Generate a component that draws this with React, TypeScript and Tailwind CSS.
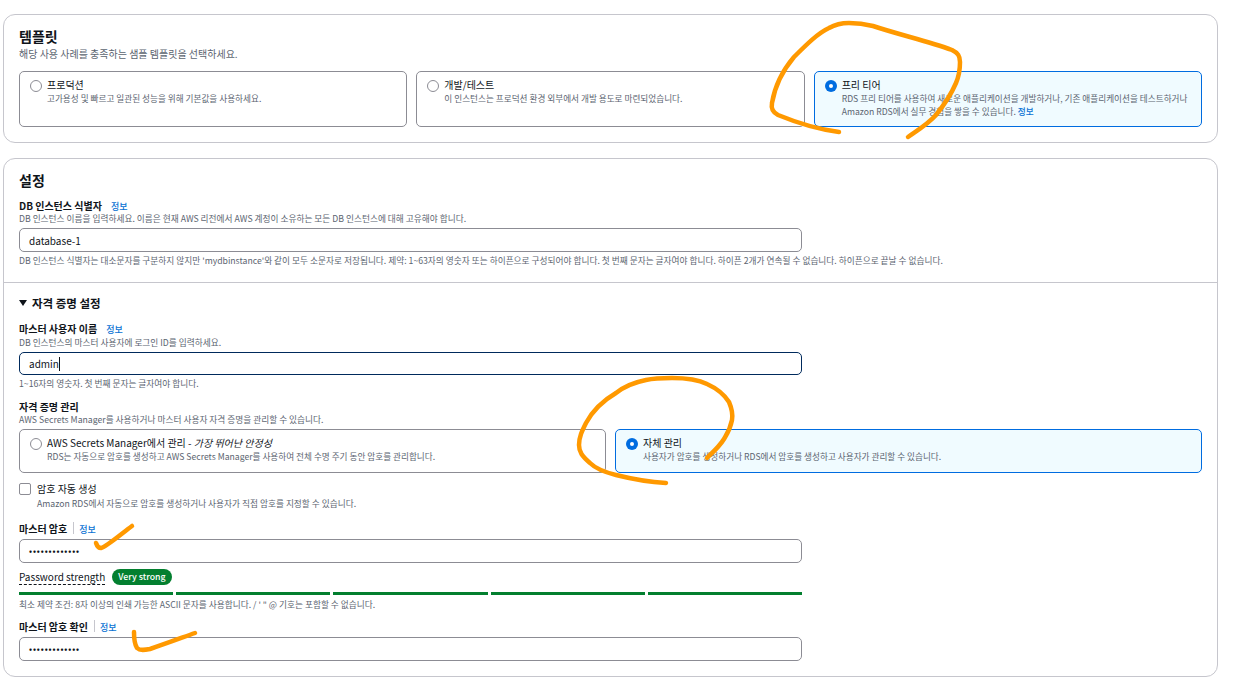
const FONT = 'font-["Noto_Sans_CJK_KR","Noto_Sans",sans-serif]'

function Label({ text, info, divider, className }: { text: string; info?: boolean; divider?: boolean; className: string }) {
  return (
    <div className={`flex h-3 items-baseline text-[10px] font-bold leading-[14px] text-[#0f141a] ${className}`}>
      {text}
      {info && !divider && <a className="ml-[9px] text-[9px] font-medium text-[#0972d3]">정보</a>}
      {divider && (
        <>
          <span className="ml-[6px] mr-[5px] h-[12px] w-px self-center bg-[#c6c6cd]" />
          <a className="text-[9px] font-medium text-[#0972d3]">정보</a>
        </>
      )}
    </div>
  )
}

function Desc({ children, className = '' }: { children: React.ReactNode; className?: string }) {
  return <p className={`h-3 whitespace-nowrap text-[8.7px] leading-[14px] text-[#5b6470] ${className}`}>{children}</p>
}

function Radio({ checked }: { checked?: boolean }) {
  if (checked) {
    return (
      <span className="mt-[1px] flex h-3 w-3 shrink-0 items-center justify-center rounded-full bg-[#006ce0]">
        <span className="h-1 w-1 rounded-full bg-white" />
      </span>
    )
  }
  return <span className="mt-[1px] h-3 w-3 shrink-0 rounded-full border border-[#8c8c94] bg-white" />
}

function Option({ title, checked, height, children }: { title: React.ReactNode; checked?: boolean; height: string; children: React.ReactNode }) {
  return (
    <div
      className={`flex gap-[5px] rounded-[5px] border pl-[10px] pr-2 pt-[7px] ${height} ${
        checked ? 'border-[#006ce0] bg-[#f0fbff]' : 'border-[#8c8c94] bg-white'
      }`}
    >
      <Radio checked={checked} />
      <div className="min-w-0">
        <div className="h-3 whitespace-nowrap text-[10px] leading-3 text-[#0f141a]">{title}</div>
        <div className="mt-px text-[8.65px] leading-[13px] text-[#5b6470]">{children}</div>
      </div>
    </div>
  )
}

function Field({ value, height = 'h-6', focused, password, className }: { value: string; height?: string; focused?: boolean; password?: boolean; className: string }) {
  return (
    <div
      className={`flex w-[783px] items-center rounded-[5px] border bg-white px-[9px] ${height} ${className} ${
        focused ? 'border-[#002a5c]' : 'border-[#8c8c94]'
      }`}
    >
      <span className={password ? 'text-[8px] font-bold tracking-[0.9px] text-[#0f141a]' : 'text-[10px] text-[#0f141a]'}>{value}</span>
      {focused && <span className="h-[14px] w-px bg-[#0f141a]" />}
    </div>
  )
}

function Scribbles() {
  const common = { fill: 'none', stroke: '#ff9900', strokeWidth: 4.5, strokeLinecap: 'round' as const, strokeLinejoin: 'round' as const }
  return (
    <svg className="pointer-events-none absolute left-0 top-0" width="1238" height="690" viewBox="0 0 1238 690">
      <path {...common} d="M839 132 C815 129 795 122 778 115 C772 112 771 108 772 103 C775 85 783 70 794 57 C806 45 818 33 829 28 C836 24 842 23 849 23 C857 23 865 24 873 26 C900 35 928 41 952 50 C958 53 960 56 960 62 C960 70 959 76 956 83 C950 97 944 105 936 115 C928 124 918 130 908 137" />
      <path {...common} d="M666 483 C648 482 632 479 616 475 C604 472 596 469 590 463 C582 456 579 452 579 445 C579 437 582 431 586 423 C593 410 604 400 616 393 C626 385 636 382 646 380 C655 378 664 378 672 378 C685 378 697 379 707 384 C718 389 724 394 729 402 C732 409 733 414 732 420 C730 430 727 434 724 439 C719 447 713 452 707 458" />
      <path {...common} d="M96 543 C97 546 99 548 101 548 C106 547 120 535 132 526" />
      <path {...common} d="M134 632 C134 640 135 645 137 648 C140 651 145 650 150 649 C165 644 181 638 195 633" />
    </svg>
  )
}

export default function App() {
  const card = 'w-[1215px] rounded-[12px] border border-[#c6c6cd] bg-white'
  return (
    <div className={`relative h-[690px] w-[1238px] overflow-hidden bg-white pl-[3px] pt-[14px] ${FONT}`}>
      <section className={`${card} px-[15px] pb-[15px] pt-[11px]`}>
        <h2 className="h-5 text-[14px] font-bold leading-5 text-[#0f141a]">템플릿</h2>
        <p className="mt-[2px] h-3 whitespace-nowrap text-[10px] leading-3 text-[#5b6470]">해당 사용 사례를 충족하는 샘플 템플릿을 선택하세요.</p>
        <div className="mt-[11px] grid grid-cols-3 gap-[9px]">
          <Option title="프로덕션" height="h-14">고가용성 및 빠르고 일관된 성능을 위해 기본값을 사용하세요.</Option>
          <Option title="개발/테스트" height="h-14">이 인스턴스는 프로덕션 환경 외부에서 개발 용도로 마련되었습니다.</Option>
          <Option title="프리 티어" height="h-14" checked>
            RDS 프리 티어를 사용하여 새로운 애플리케이션을 개발하거나, 기존 애플리케이션을 테스트하거나 Amazon RDS에서 실무 경험을 쌓을 수 있습니다.{' '}
            <a className="font-medium text-[#0972d3]">정보</a>
          </Option>
        </div>
      </section>

      <section className={`${card} mt-[15px] pb-[15px] pt-[11px]`}>
        <div className="px-[15px]">
          <h2 className="h-5 text-[14px] font-bold leading-5 text-[#0f141a]">설정</h2>
          <Label text="DB 인스턴스 식별자" info className="mt-[9px]" />
          <Desc className="mt-px">DB 인스턴스 이름을 입력하세요. 이름은 현재 AWS 리전에서 AWS 계정이 소유하는 모든 DB 인스턴스에 대해 고유해야 합니다.</Desc>
          <Field value="database-1" className="mt-1" />
          <Desc className="mt-[2px]">DB 인스턴스 식별자는 대소문자를 구분하지 않지만 'mydbinstance'와 같이 모두 소문자로 저장됩니다. 제약: 1~63자의 영숫자 또는 하이픈으로 구성되어야 합니다. 첫 번째 문자는 글자여야 합니다. 하이픈 2개가 연속될 수 없습니다. 하이픈으로 끝날 수 없습니다.</Desc>
        </div>
        <div className="mt-4 border-t border-[#c6c6cd]" />
        <div className="px-[15px]">
          <h3 className="mt-3 flex h-4 items-center gap-[5px] text-[11.5px] font-bold leading-4 text-[#0f141a]">
            <span className="h-0 w-0 border-x-[4px] border-t-[6px] border-x-transparent border-t-[#0f141a]" />
            자격 증명 설정
          </h3>
          <Label text="마스터 사용자 이름" info className="mt-[11px]" />
          <Desc className="mt-[2px]">DB 인스턴스의 마스터 사용자에 로그인 ID를 입력하세요.</Desc>
          <Field value="admin" height="h-[23px]" focused className="mt-1" />
          <Desc className="mt-[2px]">1~16자의 영숫자. 첫 번째 문자는 글자여야 합니다.</Desc>
          <Label text="자격 증명 관리" className="mt-[11px]" />
          <Desc className="mt-px">AWS Secrets Manager를 사용하거나 마스터 사용자 자격 증명을 관리할 수 있습니다.</Desc>
          <div className="mt-1 grid grid-cols-2 gap-[9px]">
            <Option
              height="h-11"
              title={
                <>
                  AWS Secrets Manager에서 관리 - <em>가장 뛰어난 안정성</em>
                </>
              }
            >
              RDS는 자동으로 암호를 생성하고 AWS Secrets Manager를 사용하여 전체 수명 주기 동안 암호를 관리합니다.
            </Option>
            <Option title="자체 관리" height="h-11" checked>
              사용자가 암호를 생성하거나 RDS에서 암호를 생성하고 사용자가 관리할 수 있습니다.
            </Option>
          </div>
          <div className="mt-[10px] flex h-3 items-center gap-[6px] text-[10px] leading-3 text-[#0f141a]">
            <span className="h-3 w-3 rounded-[2px] border border-[#8c8c94] bg-white" />
            암호 자동 생성
          </div>
          <Desc className="ml-[18px] mt-[2px]">Amazon RDS에서 자동으로 암호를 생성하거나 사용자가 직접 암호를 지정할 수 있습니다.</Desc>
          <Label text="마스터 암호" divider className="mt-[13px]" />
          <Field value="•••••••••••••" password className="mt-[5px]" />
          <div className="mt-[6px] flex h-4 items-center gap-[7px]">
            <span className="border-b border-dashed border-[#0f141a] text-[10px] leading-[14px] text-[#0f141a]">Password strength</span>
            <span className="flex h-4 items-center rounded-full bg-[#037f2f] px-[6px] text-[8.75px] font-medium text-white">Very strong</span>
          </div>
          <div className="mt-[7px] flex w-[783px] gap-[3px]">
            <div className="h-[3px] flex-1 bg-[#037f2f]" />
            <div className="h-[3px] flex-1 bg-[#037f2f]" />
            <div className="h-[3px] flex-1 bg-[#037f2f]" />
            <div className="h-[3px] flex-1 bg-[#037f2f]" />
            <div className="h-[3px] flex-1 bg-[#037f2f]" />
          </div>
          <Desc className="mt-[3px]">최소 제약 조건: 8자 이상의 인쇄 가능한 ASCII 문자를 사용합니다. / ' " @ 기호는 포함할 수 없습니다.</Desc>
          <Label text="마스터 암호 확인" divider className="mt-[10px]" />
          <Field value="•••••••••••••" password className="mt-[5px]" />
        </div>
      </section>
      <Scribbles />
    </div>
  )
}
